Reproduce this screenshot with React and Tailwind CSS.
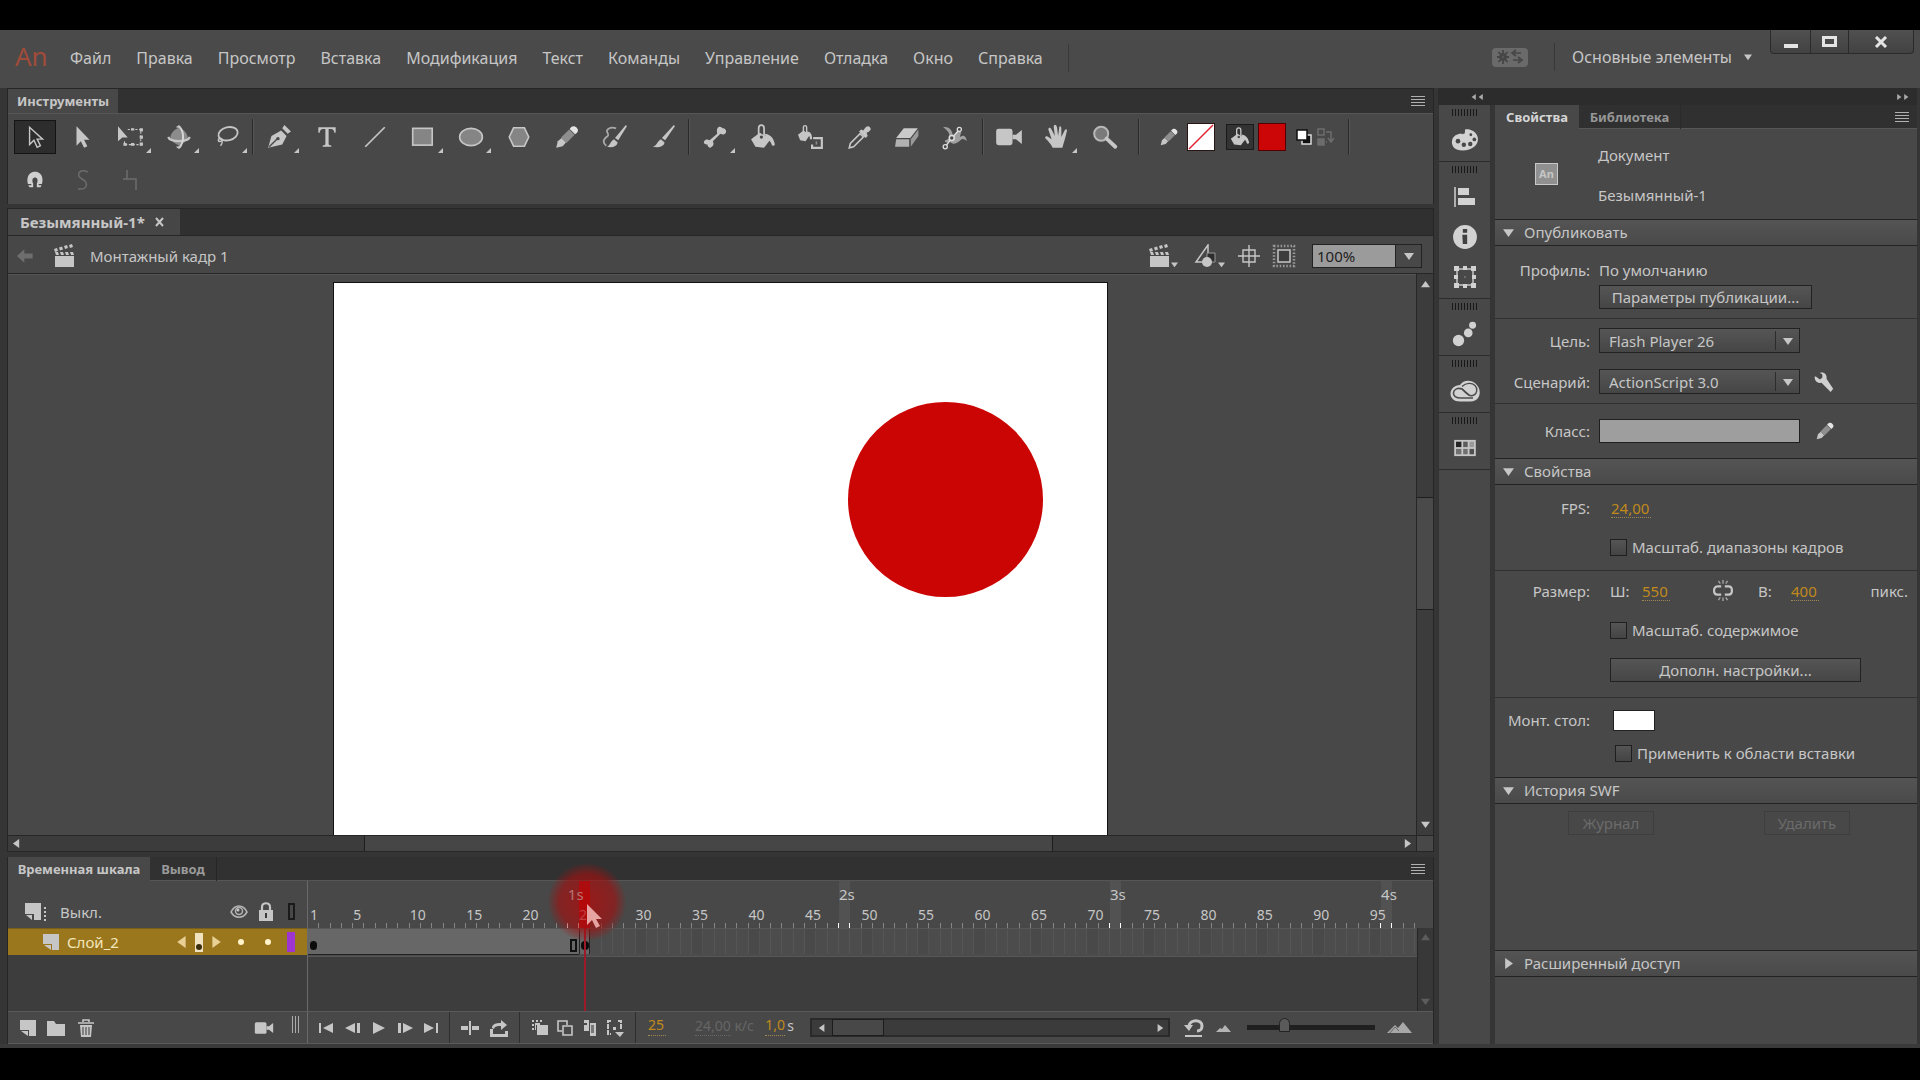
import React from 'react';

const MENU = ['Файл', 'Правка', 'Просмотр', 'Вставка', 'Модификация', 'Текст', 'Команды', 'Управление', 'Отладка', 'Окно', 'Справка'];

const FRAMES = Array.from({ length: 98 }, (_, i) => i + 1);
const CURRENT = 25;

/* ---------- icons ---------- */

const Svg = ({ w = 26, h = w, box = '0 0 24 24', children }) => (
  <svg width={w} height={h} viewBox={box} fill="#c6c6c6" stroke="none" className="shrink-0" aria-hidden="true">
    {children}
  </svg>
);

const ArrowOutline = () => (
  <Svg><path d="M7 3v16l4-4 3 6.500 3-1.500-3-6h5z" fill="none" stroke="#c6c6c6" strokeWidth="1.300" /></Svg>
);
const ArrowSolid = () => (
  <Svg><path d="M6 2v18l4-4 3 6 3-1.500-3-6h5z" /></Svg>
);
const FreeTransform = () => (
  <Svg>
    <path d="M0 2v14l4-3.500h5z" />
    <path d="M9 5h12v14H6v-4" fill="none" stroke="#c6c6c6" strokeWidth="1" strokeDasharray="2 1.500" />
    <path d="M20 4h3v3h-3zM20 10.500h3v3h-3zM20 17h3v3h-3zM12 4h3v2h-3zM12 17.500h3v2.500h-3zM5 17.500h3V20H5z" />
  </Svg>
);
const Rotate3D = () => (
  <Svg>
    <path d="M12 3c5 3 7 5 8 9-1 4-4 6-8 8-4-2-7-4-8-8 1-4 3-6 8-9z" fill="#8c8c8c" />
    <path d="M2 12c2 5 18 5 20 0" fill="none" stroke="#c6c6c6" strokeWidth="2" />
    <path d="M12 2c5 5 5 15 0 20" fill="none" stroke="#d6d6d6" strokeWidth="1.800" />
    <path d="M9 3l3-2 2 3zM9 21l3 2 3-3z" />
  </Svg>
);
const Lasso = () => (
  <Svg>
    <ellipse cx="13" cy="9" rx="9" ry="6" transform="rotate(-14 13 9)" fill="none" stroke="#c6c6c6" strokeWidth="1.700" />
    <path d="M6 13c-3 1-2 4 0 3s2-2 0-3c2 2 2 5 0 7" fill="none" stroke="#c6c6c6" strokeWidth="1.400" />
  </Svg>
);
const Pen = () => (
  <Svg>
    <path d="M2 22L5 11l9-5 5 5-4 8z" />
    <path d="M15 4l2-3 6 6-3 2z" />
    <path d="M3 21l7-7" stroke="#484848" strokeWidth="1.300" />
    <circle cx="11" cy="13.500" r="1.600" fill="#484848" />
  </Svg>
);
const TextTool = () => (
  <Svg><path d="M4 3h16v5h-1.200c-.4-2-1.300-3.300-3-3.300h-2.300V18c0 1.500.8 1.800 2.500 1.800V21H8v-1.200c1.700 0 2.500-.3 2.500-1.800V4.700H8.200c-1.700 0-2.600 1.300-3 3.300H4z" /></Svg>
);
const LineTool = () => (
  <Svg><path d="M3 21L21 3" stroke="#c6c6c6" strokeWidth="1.600" /></Svg>
);
const RectTool = () => (
  <Svg><rect x="2.500" y="4" width="18" height="15.500" fill="#858585" stroke="#c6c6c6" strokeWidth="1.500" /></Svg>
);
const OvalTool = () => (
  <Svg><ellipse cx="12" cy="12" rx="10.500" ry="8" fill="#858585" stroke="#c6c6c6" strokeWidth="1.500" /></Svg>
);
const PolyTool = () => (
  <Svg><path d="M7 3.500h10l4 8.500-4 8.500H7L3 12z" fill="#858585" stroke="#c6c6c6" strokeWidth="1.500" /></Svg>
);
const Pencil = ({ w = 26 }) => (
  <Svg w={w}>
    <path d="M2 22l1.500-6L7 13l4 4-3 3.500z" />
    <path d="M6.500 12.500L14 5l5 5-7.500 7.500z" fill="#8e8e8e" />
    <path d="M14.500 4.500c2-3 4.500-3 6.500-1s1.500 4-1.500 6z" fill="#e4e4e4" />
  </Svg>
);
const BrushPaint = () => (
  <Svg>
    <path d="M13 4C8 2 3 5 5 8s0 3-2 5-2 5 1 7" fill="none" stroke="#a8a8a8" strokeWidth="1.700" />
    <path d="M23 2l-8 13-3-2L22 1zM11 14l3.500 3c-1 4-5 5-10 4 3-1 3-5 6.500-7z" />
  </Svg>
);
const Brush = () => (
  <Svg><path d="M23 2l-9 13-3-2L22 1zM10 14l3.500 3c-1 4-5 5-11 4 4-1 4-5 7.500-7z" /></Svg>
);
const Bone = () => (
  <Svg><path d="M14 9c0-2-1-4 1-6 2-1 3 0 4 1 2 0 4 2 3 4s-3 2-5 1l-7 7c1 2 1 4-1 5-2 2-4 0-4-2-2 0-4-1-3-3s3-2 5-1z" /></Svg>
);
const Bucket = ({ w = 26 }) => (
  <Svg w={w}>
    <path d="M1 14l8-6 10 6-6 8-8-1z" />
    <path d="M8 12V4c0-4 5-4 5 0v7" fill="none" stroke="#c6c6c6" strokeWidth="1.600" />
    <path d="M14 9c6 1 8 5 9 10-1 2-3 1-3 0-1-3-3-5-6-6z" />
    <circle cx="10.500" cy="12" r="1.500" fill="#484848" />
  </Svg>
);
const InkBottle = () => (
  <Svg>
    <path d="M0 10l5-4 6 4-4 6-5-1z" />
    <path d="M5 9V3c0-2 3-2 3 0v6" fill="none" stroke="#c6c6c6" strokeWidth="1.300" />
    <path d="M8 7c4 0 5 3 5 7h-2c0-3-1-4-3-4z" />
    <path d="M14 13h8v9h-9v-3" fill="none" stroke="#c6c6c6" strokeWidth="2" />
    <path d="M17 16v3" stroke="#8a8a8a" strokeWidth="1.500" />
  </Svg>
);
const Dropper = () => (
  <Svg>
    <path d="M3 22l1-4 9-9 3 3-9 9z" fill="none" stroke="#c6c6c6" strokeWidth="1.500" />
    <path d="M12 7l2-2 2 1c2-4 5-5 6-3 2 2 0 4-3 5l1 3-2 2z" />
  </Svg>
);
const Eraser = () => (
  <Svg>
    <path d="M2 13L9 4h13l-7 9z" fill="#cacaca" />
    <path d="M2 14h12v7H1z" fill="#b2b2b2" />
    <path d="M15.500 14L22.500 5v6l-7 10z" fill="#999" />
  </Svg>
);
const WidthTool = () => (
  <Svg>
    <path d="M1 3c6-1 8 3 9 7 3 0 4-4 7-5 2 3-1 5 0 7 2-2 5-2 6 4-2-2-4-3-6-1-4 4-8 4-10 1-3 2-5 1-4-1 2-1 4-1 4-4S4 5 1 3z" fill="#a0a0a0" />
    <path d="M3 21L9 13 16 5" fill="none" stroke="#dedede" strokeWidth="1.300" />
    <circle cx="3" cy="21" r="1.900" fill="#484848" stroke="#dedede" strokeWidth="1.200" />
    <circle cx="9" cy="13" r="2.300" fill="#484848" stroke="#dedede" strokeWidth="1.400" />
    <circle cx="16" cy="5" r="1.900" fill="#484848" stroke="#dedede" strokeWidth="1.200" />
  </Svg>
);
const Camera = ({ w = 28 }) => (
  <Svg w={w}>
    <rect x="1" y="5" width="14" height="14" rx="2" />
    <path d="M15 10h3l5-4v12l-5-4h-3z" />
  </Svg>
);
const Hand = () => (
  <Svg><path d="M8 22C6 18 4 16 1 13c0-2 2-2 3-1l3 2L4 5c0-2 2-2 3 0l3 6-1-8c0-3 2-3 3 0l1 8 1-7c0-3 2-2 2 0l0 8 3-6c1-2 3-1 2 1-1 5-2 8-4 15z" /></Svg>
);
const Magnifier = () => (
  <Svg>
    <circle cx="8.500" cy="9" r="6.500" fill="#7a7a7a" stroke="#b8b8b8" strokeWidth="1.800" />
    <path d="M13.500 13.500l8 7.500" stroke="#c6c6c6" strokeWidth="3.500" strokeLinecap="round" />
  </Svg>
);
const Magnet = () => (
  <Svg w={22}>
    <path d="M6 20h4v-4c-4-9 8-9 4 0v4h4c4-6 3-17-6-17S2 14 6 20z" fill="#d0d0d0" />
    <path d="M3 17h5M16 17h5" stroke="#484848" strokeWidth="1.300" />
  </Svg>
);
const Smooth = () => (
  <Svg w={24}><path d="M17 4C7 0 5 8 11 11s7 11-4 10" fill="none" stroke="#6c6c6c" strokeWidth="1.500" /></Svg>
);
const Straighten = () => (
  <Svg w={24}><path d="M8 2v9h9v11M4 11h4" fill="none" stroke="#6c6c6c" strokeWidth="1.500" /></Svg>
);
const Clapper = () => (
  <Svg w={24}>
    <path d="M3 12h19v11H3z" />
    <path d="M3 8h3l1 3H4zM8 8h3l1 3H9zM13 8h3l1 3h-3zM18 8h3l1 3h-3zM2 5l3-1 1 3-3 1zM7 3.500l3-1 1 3-3 1zM12 2l3-1 1 3-3 1zM17 1l3-1 1 3-3 1z" />
  </Svg>
);
const SymbolEdit = () => (
  <Svg w={24}>
    <path d="M14 1L2 18h12z" fill="none" stroke="#c6c6c6" strokeWidth="1.500" />
    <path d="M13 9h8v9h-8z" fill="#2e2e2e" stroke="#999" strokeWidth="1" />
    <circle cx="13" cy="18" r="5" />
  </Svg>
);
const CenterStage = () => (
  <Svg w={24}><path d="M12 1v22M1 12h22M6 6h12v12H6z" fill="none" stroke="#c6c6c6" strokeWidth="1.400" /></Svg>
);
const ClipStage = () => (
  <Svg w={24}>
    <rect x="2" y="2" width="20" height="20" fill="none" stroke="#999" strokeWidth="2.500" strokeDasharray="1.500 1.800" />
    <rect x="6" y="6" width="12" height="12" fill="#3c3c3c" stroke="#c6c6c6" strokeWidth="1.500" />
  </Svg>
);
const BackArrow = () => (
  <Svg w={20}><path d="M1 12l9-8v5h10v6H10v5z" fill="#6e6e6e" /></Svg>
);
const Palette = () => (
  <Svg w={28}>
    <path d="M12 3c3-1 10 1 11 7s-5 11-13 11S0 16 1 12s6-6 9-5c2 0 2-1 2-4z" fill="#d2d2d2" />
    <g fill="#484848">
      <circle cx="6" cy="13" r="2" /><circle cx="11" cy="16" r="1.900" /><circle cx="16.500" cy="15.500" r="1.900" />
      <circle cx="20" cy="11.500" r="1.600" /><circle cx="17" cy="7.500" r="1.200" />
    </g>
  </Svg>
);
const Align = () => (
  <Svg w={24}>
    <path d="M2 2v20" stroke="#d2d2d2" strokeWidth="1.500" />
    <path d="M5 3h11v7H5zM5 13h17v7H5z" fill="#d2d2d2" />
  </Svg>
);
const Info = () => (
  <Svg w={26}>
    <circle cx="12" cy="12" r="11" fill="#d2d2d2" />
    <path d="M10 4.500h4v3.500h-4zM9.500 10H14v8.500h-4z" fill="#404040" />
  </Svg>
);
const Transform = () => (
  <Svg w={24}>
    <rect x="4" y="4" width="16" height="16" fill="none" stroke="#c6c6c6" strokeWidth="1.500" />
    <path d="M1 1h5v5H1zM10 1h4v4h-4zM18 1h5v5h-5zM1 10h4v4H1zM19 10h4v4h-4zM1 18h5v5H1zM10 19h4v4h-4zM18 18h5v5h-5zM11.500 11.500h1v1h-1z" fill="#d2d2d2" />
  </Svg>
);
const MotionDots = () => (
  <Svg w={26}><g fill="#d2d2d2"><circle cx="6" cy="18" r="5.200" /><circle cx="15" cy="11" r="4" /><circle cx="19" cy="4" r="3.200" /></g></Svg>
);
const CreativeCloud = () => (
  <Svg w={30} h={22} box="0 0 30 22">
    <path d="M10 5c3-5 11-6 16-1s5 12 0 16c-2 1-4 1.500-6 1.500H10C4 21.500.5 18 .5 13.500S5 5 10 5z" fill="#d2d2d2" />
    <path d="M23 18H11c-5 0-8-2-7.500-5.500S8 7.500 12 9l7 6" fill="none" stroke="#4c4c4c" strokeWidth="1.600" />
    <path d="M12 6.500c4-4 10-4 13-1s2 8-1 9.500-6 0-8-2l-4-4" fill="none" stroke="#4c4c4c" strokeWidth="1.400" />
  </Svg>
);
const Swatches = () => (
  <Svg w={24} h={18} box="0 0 26 20">
    <path d="M1 1h24v18H1z" fill="#c6c6c6" />
    <path d="M3 3h6v6H3z" fill="#242424" /><path d="M11 3h5v6h-5z" fill="#5c5c5c" /><path d="M18 3h5v6h-5z" fill="#9a9a9a" />
    <path d="M3 11h6v6H3z" fill="#707070" /><path d="M11 11h5v6h-5z" fill="#707070" /><path d="M18 11h5v6h-5z" fill="#505050" />
  </Svg>
);
const Wrench = () => (
  <Svg w={20}><path d="M3 6l4 3 3-2V3L7 1c5-2 9 2 8 7l8 12-3 4L9 13C4 14 0 10 1 5z" fill="#d0d0d0" /></Svg>
);
const BrokenLink = () => (
  <Svg w={22}>
    <path d="M10 7H6c-5 0-5 9 0 9h4M14 7h4c5 0 5 9 0 9h-4" fill="none" stroke="#c6c6c6" strokeWidth="2.400" />
    <path d="M12 0v4M7 1l2 3M17 1l-2 3M12 19v4M7 22l2-3M17 22l-2-3" stroke="#a5a5a5" strokeWidth="1.500" />
  </Svg>
);
const Sheet = ({ w = 18 }) => (
  <Svg w={w} box="0 0 18 18"><path d="M1 1h16v16h-7v-6H1z" /><path d="M2 12h7v5z" /></Svg>
);
const LayerModes = () => (
  <Svg w={24} h={20} box="0 0 24 20"><path d="M1 1h16v17h-7v-6H1zM2 13h6v5zM20 5h2v2h-2zM20 9h2v2h-2zM20 13h2v2h-2zM20 17h2v2h-2z" /></Svg>
);
const Eye = () => (
  <Svg w={18} h={16} box="0 0 18 16">
    <path d="M1 8c4-8 12-8 16 0-4 7-12 7-16 0z" fill="none" stroke="#b4b4b4" strokeWidth="1.600" />
    <circle cx="9" cy="7" r="3.500" fill="none" stroke="#b4b4b4" strokeWidth="1.500" /><circle cx="8" cy="6" r="1.500" />
  </Svg>
);
const Lock = () => (
  <Svg w={16} h={20} box="0 0 16 20">
    <path d="M4 9V5c0-5 8-5 8 0v4" fill="none" stroke="#c6c6c6" strokeWidth="2.200" />
    <path d="M1 8h14v11H1z" /><path d="M7 11h2v5H7z" fill="#3a3a3a" />
  </Svg>
);
const Folder = () => (
  <Svg w={18} box="0 0 18 18"><path d="M0 2h7l2 3h9v12H0z" /></Svg>
);
const Trash = () => (
  <Svg w={18} box="0 0 18 18">
    <path d="M1 4h16M6 3V1h6v2" fill="none" stroke="#c6c6c6" strokeWidth="1.600" />
    <path d="M3 6h12l-1 12H4z" /><path d="M6 8v8M9 8v8M12 8v8" stroke="#484848" strokeWidth="1.100" />
  </Svg>
);
const Tri = ({ dir = 'down', color = '#c6c6c6', s = 10 }) => {
  const d = { down: 'M0 2h10L5 9z', up: 'M0 8h10L5 1z', left: 'M8 0v10L1 5z', right: 'M2 0v10l7-5z' }[dir];
  return <svg width={s} height={s} viewBox="0 0 10 10" className="shrink-0" aria-hidden="true"><path d={d} fill={color} /></svg>;
};
const Cursor = () => (
  <svg width="16" height="27" viewBox="0 0 16 27" aria-hidden="true"><path d="M1 1v21l5-5 4 8 4-2-4-7h6z" fill="#e8a3a3" /></svg>
);

/* ---------- small parts ---------- */

const PanelMenu = () => (
  <button className="flex flex-col gap-[2px]" aria-label="Меню панели">
    <span className="w-3.5 h-px bg-[#b0b0b0]" />
    <span className="w-3.5 h-px bg-[#b0b0b0]" />
    <span className="w-3.5 h-px bg-[#b0b0b0]" />
    <span className="w-3.5 h-px bg-[#b0b0b0]" />
  </button>
);

const Tool = ({ icon, more, active }) => (
  <button className="relative w-12 h-9 flex items-center justify-center">
    {active ? <span className="w-[42px] h-[34px] bg-[#2d2d2d] border border-[#141414] flex items-center justify-center">{icon}</span> : icon}
    {more && (
      <svg width="5" height="5" viewBox="0 0 5 5" className="absolute right-1 bottom-[2px]"><path d="M5 0v5H0z" fill="#c6c6c6" /></svg>
    )}
  </button>
);

const Sep = () => <span className="w-px h-9 mx-[1px] bg-[#2a2a2a] border-r border-[#555] box-content shrink-0" />;
const Divider = () => <span className="w-px self-stretch bg-[#2e2e2e] shrink-0" />;

const Section = ({ title, closed }) => (
  <button className="h-[27px] shrink-0 w-full flex items-center gap-2.5 pl-2 pb-px border-y border-[#222] bg-linear-to-b from-[#545454] to-[#4a4a4a]">
    <Tri dir={closed ? 'right' : 'down'} s={11} />
    <span>{title}</span>
  </button>
);

const Row = ({ label, htmlFor, children }) => (
  <div className="flex items-center min-h-6">
    <label htmlFor={htmlFor} className="w-[95px] mr-[9px] text-right shrink-0">{label}</label>
    {children}
  </div>
);

const Select = ({ id, value }) => (
  <div className="relative w-[201px] h-[25px]">
    <select id={id} className="appearance-none w-full h-full pl-[9px] border border-[#222] bg-linear-to-b from-[#555] to-[#464646] outline-none">
      <option>{value}</option>
    </select>
    <span className="absolute right-0 inset-y-[3px] w-[25px] flex items-center justify-center border-l border-[#2c2c2c] pointer-events-none">
      <Tri />
    </span>
  </div>
);

const Check = ({ label, pad = 'pl-[115px]' }) => (
  <label className={`flex items-center gap-[5px] h-6 ${pad}`}>
    <input type="checkbox" className="appearance-none w-[17px] h-[17px] border border-[#1f1f1f] bg-linear-to-b from-[#555] to-[#444]" />
    {label}
  </label>
);

const HotText = ({ id, label, value, width = 'w-7' }) => (
  <input
    id={id}
    aria-label={label}
    defaultValue={value}
    className={`${width} h-5 text-[#c08a1c] bg-transparent border-b border-dotted border-[#a08850] outline-none`}
  />
);

const Grip = () => (
  <div className="h-[15px] flex items-center justify-center gap-[2px]">
    {Array.from({ length: 9 }, (_, i) => <span key={i} className="w-px h-[7px] bg-[#181818]" />)}
  </div>
);

const DockGroup = ({ icons }) => (
  <div className="border-b border-[#2c2c2c] pb-px">
    <Grip />
    {icons.map((icon, i) => (
      <button key={i} className="h-10 w-full flex items-center justify-center">{icon}</button>
    ))}
  </div>
);

/* ---------- areas ---------- */

const MenuBar = () => (
  <header className="h-[58px] shrink-0 flex items-start bg-[#4a4a4a] text-[16px]">
    <span className="w-[58px] pl-[15px] pt-[6px] text-[26px] leading-10 text-[#a14c3a]">An</span>
    <nav className="flex items-center h-14 gap-[25px] pl-3">
      {MENU.map(item => <button key={item}>{item}</button>)}
      <span className="w-px h-7 bg-[#3a3a3a]" />
    </nav>
    <div className="ml-auto flex items-center h-[54px]">
      <button className="w-9 h-[19px] rounded-sm bg-[#6a6a6a] flex items-center justify-center" aria-label="Синхронизация">
        <svg width="28" height="16" viewBox="0 0 28 16" fill="none" stroke="#464646">
          <path d="M7 1v14M1 8h12M2.500 3l9 10M11.500 3l-9 10" strokeWidth="1.800" />
          <circle cx="7" cy="8" r="3.500" fill="#464646" /><circle cx="7" cy="8" r="1.300" fill="#6a6a6a" />
          <path d="M25 4h-7M20 1l-4 3 4 3M17 11h7M22 8l4 3-4 3" strokeWidth="1.700" />
        </svg>
      </button>
      <span className="w-px h-7 ml-[26px] mr-[17px] bg-[#383838]" />
      <button className="flex items-center gap-3">Основные элементы <Tri s={8} /></button>
    </div>
    <div className="ml-[18px] mr-[6px] h-6 flex border border-t-0 border-[#2a2a2a] rounded-b bg-linear-to-b from-[#505050] to-[#424242]">
      <button className="w-10 flex items-center justify-center border-r border-[#2a2a2a]" aria-label="Свернуть">
        <span className="w-3.5 h-1 mt-2 bg-[#e4e4e4]" />
      </button>
      <button className="w-[38px] flex items-center justify-center border-r border-[#2a2a2a]" aria-label="Развернуть">
        <span className="w-[15px] h-[11px] border-3 border-[#e4e4e4]" />
      </button>
      <button className="w-16 flex items-center justify-center" aria-label="Закрыть">
        <svg width="14" height="12" viewBox="0 0 14 12"><path d="M2 1l10 10M12 1L2 11" stroke="#e4e4e4" strokeWidth="3" /></svg>
      </button>
    </div>
  </header>
);

const Toolbar = () => (
  <section className="border border-[#262626] border-b-0 bg-[#484848]">
    <div className="h-6 flex items-center justify-between bg-[#313131] pr-2">
      <button className="h-6 px-[9px] bg-[#484848] text-[13px] font-bold">Инструменты</button>
      <PanelMenu />
    </div>
    <div className="h-[91px] pt-[5px] pl-[3px] flex flex-col gap-[7px] border-t border-[#565656]">
      <div className="flex items-center">
        <Tool icon={<ArrowOutline />} active />
        <Tool icon={<ArrowSolid />} />
        <Tool icon={<FreeTransform />} more />
        <Tool icon={<Rotate3D />} more />
        <Tool icon={<Lasso />} more />
        <Sep />
        <Tool icon={<Pen />} more />
        <Tool icon={<TextTool />} />
        <Tool icon={<LineTool />} />
        <Tool icon={<RectTool />} more />
        <Tool icon={<OvalTool />} more />
        <Tool icon={<PolyTool />} />
        <Tool icon={<Pencil />} />
        <Tool icon={<BrushPaint />} />
        <Tool icon={<Brush />} />
        <Sep />
        <Tool icon={<Bone />} more />
        <Tool icon={<Bucket />} />
        <Tool icon={<InkBottle />} />
        <Tool icon={<Dropper />} />
        <Tool icon={<Eraser />} />
        <Tool icon={<WidthTool />} />
        <span className="w-[2px]" />
        <Sep />
        <Tool icon={<Camera />} />
        <Tool icon={<Hand />} more />
        <Tool icon={<Magnifier />} />
        <span className="w-2" />
        <Sep />
        <div className="flex items-center pl-[18px]">
          <Pencil w={20} />
          <button className="ml-2 w-7 h-7 bg-white border border-[#2a1515]" aria-label="Цвет обводки">
            <svg width="26" height="26" viewBox="0 0 26 26"><path d="M1 25L25 1" stroke="#e0202f" strokeWidth="1.500" /></svg>
          </button>
          <button className="ml-[11px] w-7 h-[26px] bg-[#333] border border-[#1a1a1a] flex items-center justify-center" aria-label="Заливка">
            <Bucket w={20} />
          </button>
          <button className="ml-1 w-7 h-7 bg-[#cc0606] border border-[#500]" aria-label="Цвет заливки" />
          <button className="ml-2.5" aria-label="Черно-белое">
            <svg width="17" height="17" viewBox="0 0 17 17">
              <rect x="6" y="6" width="9" height="9" fill="#111" stroke="#ddd" strokeWidth="1.500" />
              <rect x="1" y="1" width="10" height="10" fill="#fff" stroke="#111" strokeWidth="1.500" />
            </svg>
          </button>
          <button className="ml-1" aria-label="Поменять цвета">
            <svg width="18" height="18" viewBox="0 0 18 18" fill="none" stroke="#6c6c6c" strokeWidth="1.500">
              <rect x="1" y="1" width="6" height="6" /><rect x="1" y="11" width="6" height="6" fill="#6c6c6c" />
              <path d="M9 4h5v9M11 10l3 4 3-4M10 14H9" />
            </svg>
          </button>
          <span className="ml-3 flex"><Sep /></span>
        </div>
      </div>
      <div className="flex">
        <Tool icon={<Magnet />} />
        <Tool icon={<Smooth />} />
        <Tool icon={<Straighten />} />
      </div>
    </div>
  </section>
);

const StageArea = () => (
  <section className="flex-1 min-h-0 flex flex-col border-x border-[#262626] text-[15px]">
    <div className="h-7 shrink-0 flex bg-[#303030] border-y border-[#262626]">
      <button className="flex items-center gap-2.5 w-[172px] pl-3 bg-[#464646] font-bold">
        Безымянный-1*
        <svg width="9" height="10" viewBox="0 0 9 10"><path d="M1 1l7 8M8 1L1 9" stroke="#c6c6c6" strokeWidth="2" /></svg>
      </button>
    </div>
    <div className="h-[38px] shrink-0 flex items-center bg-[#474747] pl-2 pr-[11px] pt-[3px] border-b border-[#262626]">
      <BackArrow />
      <span className="ml-4"><Clapper /></span>
      <span className="ml-3.5">Монтажный кадр 1</span>
      <div className="ml-auto flex items-center">
        <button className="flex items-end"><Clapper /><Tri s={7} /></button>
        <button className="flex items-end ml-4"><SymbolEdit /><Tri s={7} /></button>
        <button className="ml-3"><CenterStage /></button>
        <button className="ml-[11px]"><ClipStage /></button>
        <div className="ml-4 flex h-6 w-[110px] border border-[#222]">
          <input aria-label="Масштаб" defaultValue="100%" className="w-[82px] pl-1 bg-[#9b9b9b] text-[#222] outline-none" />
          <button className="flex-1 flex items-center justify-center border-l border-[#222] bg-[#484848]" aria-label="Выбрать масштаб"><Tri /></button>
        </div>
      </div>
    </div>
    <div className="flex-1 min-h-0 flex">
      <div className="flex-1 pt-[7px] pl-[325px] flex bg-[#484848] border-t border-[#555]">
        <div className="relative w-[775px] border border-b-0 border-[#111] bg-white overflow-hidden">
          <div className="absolute left-[514px] top-[119px] w-[195px] h-[195px] rounded-full bg-[#cb0404]" />
        </div>
      </div>
      <div className="w-[17px] shrink-0 flex flex-col items-center bg-[#3c3c3c] border-l border-[#262626] py-[6px]">
        <Tri dir="up" s={9} />
        <div className="flex-[210]" />
        <div className="flex-[113] w-full bg-[#4a4a4a] border-y border-[#1d1d1d]" />
        <div className="flex-[212]" />
        <Tri dir="down" s={9} />
      </div>
    </div>
    <div className="h-[17px] shrink-0 flex border-y border-[#262626] bg-[#3c3c3c]">
      <div className="flex-1 flex items-center pl-1 pr-1">
        <Tri dir="left" s={9} />
        <div className="flex-[343]" />
        <div className="flex-[687] self-stretch bg-[#464646] border-x border-[#1d1d1d]" />
        <div className="flex-[350]" />
        <Tri dir="right" s={9} />
      </div>
      <span className="w-[17px] bg-[#484848] border-l border-[#262626]" />
    </div>
  </section>
);

const Playhead = () => (
  <>
    <div className="absolute top-0 left-0 w-full h-[130px] z-10 pointer-events-none">
      <div className="h-[47px] bg-[#b30c10]" />
      <div className="w-[2px] h-[83px] mx-auto bg-[#9c1b27]" />
      <div className="absolute -left-[31px] -top-[18px] w-[78px] h-[78px] rounded-full bg-radial from-[#b40808b3] from-10% via-[#a01010a6] via-50% to-transparent to-72%" />
    </div>
    <div className="absolute left-[7px] top-[22px] z-30 pointer-events-none"><Cursor /></div>
  </>
);

const Ruler = () => (
  <div className="h-[47px] grid grid-cols-[repeat(98,minmax(0,1fr))] pr-[2px] mr-4">
    {FRAMES.map(n => {
      const second = n % 24 === 0;
      const edge = second || n % 24 === 23;
      return (
        <div key={n} className={`relative flex flex-col whitespace-nowrap ${second && n > 24 ? 'bg-[#525252]' : ''}`}>
          <span className={`relative z-20 h-[26px] leading-[26px] text-[15px] ${n === 24 ? 'text-[#b87474]' : ''}`}>
            {second ? `${n / 24}s` : ''}
          </span>
          <span className={`relative z-20 h-4 leading-4 ${n === 1 ? 'pl-[2px]' : ''} ${n === CURRENT ? 'text-[#c04040]' : ''}`}>
            {n === 1 || n % 5 === 0 ? n : ''}
          </span>
          <span className={`self-end w-px h-[5px] ${edge ? 'bg-white' : 'bg-[#858585]'}`} />
          {n === CURRENT && <Playhead />}
        </div>
      );
    })}
  </div>
);

const FrameRow = () => (
  <div className="h-[29px] grid grid-cols-[repeat(98,minmax(0,1fr))] pr-[2px] bg-[#4c4c4c] border-y border-[#575757]">
    <div className="col-span-24 h-[26px] flex items-center justify-between bg-[#676767] border-b border-[#222] px-[2px]">
      <span className="w-[7px] h-[9px] mt-2 rounded-full bg-[#0c0c0c]" />
      <span className="w-[7px] h-[13px] mt-2 border-2 border-[#111]" />
    </div>
    {FRAMES.slice(24).map(n => (
      <div
        key={n}
        className={`h-[25px] flex justify-center items-center border-r ${
          n === CURRENT ? 'bg-[#666] border-l border-[#222]' : n % 5 === 0 ? 'bg-[#494949] border-[#525252]' : 'border-[#565656]'
        }`}
      >
        {n === CURRENT && <span className="w-2 h-[9px] mt-2 rounded-full bg-[#0c0c0c] shrink-0" />}
      </div>
    ))}
  </div>
);

const Timeline = () => (
  <section className="shrink-0 mt-[5px] border-x border-[#262626] bg-[#484848]">
    <div className="h-6 flex items-center bg-[#313131] pr-2 border-b border-[#565656] text-[13px] font-bold">
      <button className="h-6 w-[142px] bg-[#484848]">Временная шкала</button>
      <button className="h-6 w-[67px] text-[#9a9a9a] border-r border-[#262626]">Вывод</button>
      <span className="ml-auto"><PanelMenu /></span>
    </div>
    <div className="flex">
      <div className="w-[300px] shrink-0 border-r border-[#6a6a6a] bg-[#3d3d3d] text-[15px]">
        <div className="h-[47px] pt-3.5 flex items-center bg-[#484848] pl-4">
          <LayerModes />
          <span className="ml-3 w-[170px]">Выкл.</span>
          <Eye />
          <span className="ml-[10px]"><Lock /></span>
          <span className="ml-[14px] w-[7px] h-[17px] border-2 border-[#1a1a1a]" />
        </div>
        <div className="h-[27px] flex items-center bg-[#9a761c] pl-[34px] text-[#f2e6bd] border-t border-[#7a5f1c]">
          <Sheet />
          <span className="ml-[7px] w-[109px]">Слой_2</span>
          <Tri dir="left" color="#e8cf94" s={12} />
          <span className="ml-[7px] mr-[7px] w-2 h-[19px] bg-[#f0e2c0] flex items-end justify-center pb-[2px]">
            <span className="w-1.5 h-1.5 rounded-full bg-[#3a2d10]" />
          </span>
          <Tri dir="right" color="#e8cf94" s={12} />
          <span className="ml-4 w-1.5 h-1.5 rounded-full bg-[#fff4cc]" />
          <span className="ml-[21px] w-1.5 h-1.5 rounded-full bg-[#fff4cc]" />
          <span className="ml-4 w-2 h-5 bg-[#9f35d0]" />
        </div>
      </div>
      <div className="flex-1 min-w-0">
        <Ruler />
        <div className="flex h-[83px] bg-[#3d3d3d]">
          <div className="flex-1 min-w-0"><FrameRow /></div>
          <div className="w-4 flex flex-col items-center justify-between py-[5px] bg-[#383838] border-l border-[#262626]">
            <Tri dir="up" color="#5c5c5c" s={9} />
            <Tri dir="down" color="#5c5c5c" s={9} />
          </div>
        </div>
      </div>
    </div>
    <div className="h-[33px] flex items-center border-y border-[#5a5a5a]">
      <div className="w-[300px] h-full shrink-0 flex items-center pl-[11px] border-r border-[#6a6a6a]">
        <Sheet />
        <span className="ml-[10px]"><Folder /></span>
        <span className="ml-3"><Trash /></span>
        <span className="ml-auto mr-[18px]"><Camera w={20} /></span>
        <span className="flex gap-[2px] mr-2 mb-1.5">
          <span className="w-px h-[17px] bg-[#aaa]" /><span className="w-px h-[17px] bg-[#aaa]" /><span className="w-px h-[17px] bg-[#aaa]" />
        </span>
      </div>
      <div className="flex items-center h-full gap-[10px] pl-[11px] pr-[10px]">
        <Svg w={16} box="0 0 16 16"><path d="M0 3h2v10H0zM14 3v10L4 8z" /></Svg>
        <Svg w={16} box="0 0 16 16"><path d="M10 3v10L0 8zM12 3h3v10h-3z" /></Svg>
        <Svg w={16} box="0 0 16 16"><path d="M2 2v12l12-6z" /></Svg>
        <Svg w={16} box="0 0 16 16"><path d="M1 3h3v10H1zM6 3v10l10-5z" /></Svg>
        <Svg w={16} box="0 0 16 16"><path d="M1 3v10l10-5zM13 3h2v10h-2z" /></Svg>
      </div>
      <Divider />
      <div className="flex items-center gap-[10px] pl-[11px] pr-[10px]">
        <Svg w={18} box="0 0 18 18"><path d="M0 7h7v4H0zM11 7h7v4h-7zM8 2h2v14H8z" /></Svg>
        <Svg w={20} box="0 0 20 20"><path d="M1 11h3v5h12v-3h3v6H1zM3 10c0-4 4-5 9-5V2l6 5-6 5V8c-4 0-6 0-7 3z" /></Svg>
      </div>
      <Divider />
      <div className="flex items-center gap-[7px] px-[11px]">
        <Svg w={18} box="0 0 18 18"><path d="M1 1h2v2H1zM5 1h2v2H5zM9 1h2v2H9zM1 5h2v2H1zM1 9h2v2H1zM4 4h5v2H5v5H4z" /><path d="M6 6h11v10H6z" /></Svg>
        <Svg w={18} box="0 0 18 18"><path d="M6 12H2V2h9v4M7 7h9v9H7z" fill="none" stroke="#c6c6c6" strokeWidth="1.600" /></Svg>
        <Svg w={18} box="0 0 18 18"><path d="M3 1h5v11H3z" /><path d="M3 4h3v2H3z" fill="#484848" /><path d="M9 4h6v13H9z" /><path d="M10 6h3v8h-3z" fill="#777" /></Svg>
        <Svg w={18} box="0 0 18 18"><path d="M5 2H2v13h3M12 2h3v9" fill="none" stroke="#c6c6c6" strokeWidth="2" strokeDasharray="5 1" /><path d="M7 8h3v3H7zM9 13h9l-4 5z" /></Svg>
      </div>
      <Divider />
      <div className="flex items-center pl-3 pr-4 w-[174px] mb-1">
        <HotText label="Текущий кадр" value="25" width="w-[18px]" />
        <span className="ml-[29px] text-[#666]"><span className="border-b border-dotted border-[#666]">24,00</span> к/с</span>
        <span className="ml-auto flex"><HotText label="Время" value="1,0" width="w-5" /></span>
        <span className="ml-[2px]">s</span>
      </div>
      <div className="flex-1 max-w-[360px] h-[19px] flex items-center border-2 border-[#2a2a2a] bg-[#3b3b3b] mr-[14px]">
        <span className="w-5 flex justify-center"><Tri dir="left" s={8} /></span>
        <span className="w-[52px] h-[17px] border border-[#1c1c1c] bg-[#484848]" />
        <span className="ml-auto mr-1"><Tri dir="right" s={8} /></span>
      </div>
      <Svg w={20} box="0 0 20 20"><path d="M5 8c1-7 13-7 13 0 0 3-2 5-5 5" fill="none" stroke="#c6c6c6" strokeWidth="3" /><path d="M0 7h9l-4 6zM1 17h17v2H1z" /></Svg>
      <span className="ml-3 mr-4"><Svg w={15} h={8} box="0 0 15 8"><path d="M0 8l4-4 2 1 3-4 6 7z" fill="#b4b4b4" /></Svg></span>
      <input
        type="range"
        aria-label="Масштаб кадров"
        defaultValue="27"
        className="w-[128px] h-4 appearance-none bg-transparent [&::-webkit-slider-runnable-track]:h-[5px] [&::-webkit-slider-runnable-track]:bg-[#1f1f1f] [&::-webkit-slider-thumb]:appearance-none [&::-webkit-slider-thumb]:w-[11px] [&::-webkit-slider-thumb]:h-[14px] [&::-webkit-slider-thumb]:-mt-[7px] [&::-webkit-slider-thumb]:rounded-t-full [&::-webkit-slider-thumb]:bg-[#5a5a5a] [&::-webkit-slider-thumb]:border [&::-webkit-slider-thumb]:border-[#222]"
      />
      <span className="ml-3 mr-5"><Svg w={25} h={11} box="0 0 25 11"><path d="M0 11l8-8 3 3 5-6 9 11z" fill="#a8a8a8" /><path d="M3 11l5-6 4 4" fill="none" stroke="#666" /></Svg></span>
    </div>
  </section>
);

const Dock = () => (
  <aside className="w-[53px] shrink-0 bg-[#484848] border-x border-[#333]">
    <DockGroup icons={[<Palette />]} />
    <DockGroup icons={[<Align />, <Info />, <Transform />]} />
    <DockGroup icons={[<MotionDots />]} />
    <DockGroup icons={[<CreativeCloud />]} />
    <DockGroup icons={[<Swatches />]} />
  </aside>
);

const Properties = () => (
  <aside className="flex-1 flex flex-col bg-[#484848] text-[15px]">
    <div className="h-6 shrink-0 flex items-center bg-[#303030] border-b border-[#565656] text-[13px] font-bold pr-2">
      <button className="h-6 w-[84px] bg-[#484848] text-[#d6d6d6]">Свойства</button>
      <button className="h-6 w-[102px] text-[#969696] border-r border-[#2a2a2a]">Библиотека</button>
      <span className="ml-auto"><PanelMenu /></span>
    </div>
    <div className="h-[90px] shrink-0 flex items-center pl-10">
      <span className="w-[23px] h-[22px] bg-[#909090] border border-[#c8c8c8] text-[11px] font-bold leading-5 text-center">An</span>
      <div className="ml-10 pt-[2px] flex flex-col gap-4">
        <span className="leading-6">Документ</span>
        <span className="leading-6">Безымянный-1</span>
      </div>
    </div>

    <Section title="Опубликовать" />
    <div className="pt-3 pb-[9px] border-b border-[#303030]">
      <Row label="Профиль:">По умолчанию</Row>
      <button className="mt-[3px] ml-[104px] w-[213px] h-6 border border-[#222] bg-linear-to-b from-[#555] to-[#464646]">Параметры публикации...</button>
    </div>
    <div className="py-[9px] flex flex-col gap-4 border-b border-[#303030]">
      <Row label="Цель:" htmlFor="target"><Select id="target" value="Flash Player 26" /></Row>
      <Row label="Сценарий:" htmlFor="script">
        <Select id="script" value="ActionScript 3.0" />
        <button className="ml-3.5" aria-label="Настройки ActionScript"><Wrench /></button>
      </Row>
    </div>
    <div className="py-[15px]">
      <Row label="Класс:" htmlFor="class">
        <input id="class" className="w-[201px] h-6 bg-[#9e9e9e] border border-[#1f1f1f] outline-none" />
        <button className="ml-[15px]" aria-label="Изменить класс"><Pencil w={20} /></button>
      </Row>
    </div>

    <Section title="Свойства" />
    <div className="pt-[11px] pb-[11px] flex flex-col gap-[15px] border-b border-[#303030]">
      <Row label="FPS:" htmlFor="fps"><span className="ml-3 flex"><HotText id="fps" value="24,00" width="w-10" /></span></Row>
      <Check label="Масштаб. диапазоны кадров" />
    </div>
    <div className="pt-2 pb-[15px] flex flex-col gap-[15px] border-b border-[#303030]">
      <Row label="Размер:" htmlFor="w">
        <label htmlFor="w" className="ml-[11px] w-8">Ш:</label>
        <HotText id="w" value="550" />
        <button className="ml-[42px]" aria-label="Связать размеры"><BrokenLink /></button>
        <label htmlFor="h" className="ml-6 w-[33px]">В:</label>
        <HotText id="h" value="400" />
        <span className="ml-auto mr-[9px]">пикс.</span>
      </Row>
      <Check label="Масштаб. содержимое" />
      <button className="mt-px ml-[115px] w-[251px] h-6 border border-[#222] bg-linear-to-b from-[#555] to-[#464646]">Дополн. настройки...</button>
    </div>
    <div className="pt-2.5 pb-3 flex flex-col gap-[9px]">
      <Row label="Монт. стол:"><button className="ml-3.5 w-[42px] h-[21px] bg-white border border-[#222]" aria-label="Цвет монтажного стола" /></Row>
      <Check label="Применить к области вставки" pad="pl-[120px]" />
    </div>

    <Section title="История SWF" />
    <div className="h-[146px] shrink-0 pt-[7px] flex">
      <button className="ml-[73px] w-[86px] h-6 border border-[#3e3e3e] text-[#6b6b6b]" disabled>Журнал</button>
      <button className="ml-[110px] w-[86px] h-6 border border-[#3e3e3e] text-[#6b6b6b]" disabled>Удалить</button>
    </div>
    <Section title="Расширенный доступ" closed />
  </aside>
);

const App = () => (
  <div className="h-screen bg-black pt-[30px] pb-8 text-[14px] leading-5 text-[#c6c6c6] font-['Noto_Sans','Open_Sans',sans-serif]">
    <div className="h-full flex flex-col bg-[#3a3a3a] pb-1 overflow-hidden">
      <MenuBar />
      <div className="flex-1 min-h-0 flex pl-[7px] pr-[3px] gap-1 bg-[#353535]">
        <main className="flex-1 min-w-0 flex flex-col">
          <Toolbar />
          <div className="h-1 shrink-0" />
          <StageArea />
          <Timeline />
        </main>
        <div className="w-[479px] shrink-0 flex flex-col">
          <div className="h-[17px] shrink-0 flex items-center bg-[#2c2c2c] pl-[33px] pr-2">
            <button className="flex gap-px" aria-label="Развернуть панели"><Tri dir="left" s={6} color="#aaa" /><Tri dir="left" s={6} color="#aaa" /></button>
            <button className="flex gap-px ml-auto" aria-label="Свернуть панели"><Tri dir="right" s={6} color="#aaa" /><Tri dir="right" s={6} color="#aaa" /></button>
          </div>
          <div className="flex-1 min-h-0 flex gap-1">
            <Dock />
            <Properties />
          </div>
        </div>
      </div>
    </div>
  </div>
);

export default App;
